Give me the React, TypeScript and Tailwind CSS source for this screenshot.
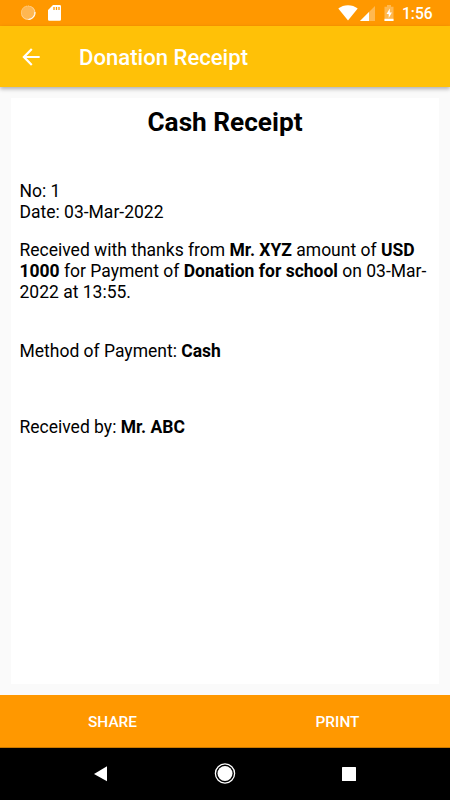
import React from "react";

export default function App() {
  return (
    <div className="flex h-[800px] w-[450px] flex-col overflow-hidden bg-[#fafafa] font-['Roboto',sans-serif]">
      <div className="flex h-[26px] shrink-0 items-center bg-[#ff9800] text-white">
        <svg width="80" height="26" viewBox="0 0 80 26">
          <circle cx="28.300" cy="12.900" r="7.200" fill="#ffd59b" />
          <circle cx="27.900" cy="12.500" r="6.500" fill="#ffb752" stroke="#ffcb80" strokeWidth="0.900" strokeDasharray="1 1" />
          <path d="M35 12a7 7 0 0 1-6.500 7.500" fill="none" stroke="#fff" strokeWidth="1" />
          <path d="M53 5H59.700a1.300 1.300 0 0 1 1.300 1.300v13.200a1.300 1.300 0 0 1-1.300 1.300H49.300a1.300 1.300 0 0 1-1.300-1.300V10z" fill="#fff" />
          <path d="M54 7v3M56.500 7v3M59 7v3" stroke="#ff9800" strokeWidth="1.300" />
        </svg>
        <svg className="ml-auto" width="64" height="26" viewBox="336 0 64 26">
          <path d="M338.300 8.500C343.500 4 352.500 4 357.700 8.500L348 20.500z" fill="#fff" />
          <path d="M375 6V21H360z" fill="#ffb850" />
          <path d="M369 12V21H360z" fill="#fff" />
          <path d="M387 5h4v1.800h2.500V21h-9V6.800h2.500z" fill="#ffb850" />
          <path d="M384.500 18.800h9V21h-9z" fill="#fff" />
          <path d="M389.800 8.500l-3.300 5.500h2.200v4l3.200-5.500h-2.100z" fill="#fff" />
        </svg>
        <span className="w-[50px] pt-[2px] pl-[2px] text-[15.600px] leading-[26px] font-medium">1:56</span>
      </div>
      <header className="relative flex h-[61px] shrink-0 items-center bg-[#ffc107] text-white shadow-[0_2px_4px_rgba(0,0,0,0.3)]">
        <svg className="ml-[18px]" width="26" height="26" viewBox="0 0 24 24" fill="#fff"><path d="M20 11H7.830l5.590-5.590L12 4l-8 8 8 8 1.410-1.410L7.830 13H20z" /></svg>
        <h1 className="ml-[35px] pt-[3px] text-[22.100px] font-medium">Donation Receipt</h1>
      </header>
      <main className="mx-[11px] mt-[11px] mb-[11px] flex-1 bg-white pr-[9px] pl-[8.500px] text-[17.500px] leading-[21px] text-black">
        <h2 className="pt-[9px] pl-[0.500px] text-center text-[26.200px] leading-[31px] font-bold">Cash Receipt</h2>
        <p className="mt-[43px]">No: 1<br />Date: 03-Mar-2022</p>
        <p className="mt-[17px] whitespace-nowrap">Received with thanks from <b className="font-bold">Mr. XYZ</b> amount of <b className="font-bold">USD<br />1000</b> for Payment of <b className="font-bold">Donation for school</b> on 03-Mar-<br />2022 at 13:55.</p>
        <p className="mt-[38px]">Method of Payment: <b className="font-bold">Cash</b></p>
        <p className="mt-[55px]">Received by: <b className="font-bold">Mr. ABC</b></p>
      </main>
      <div className="grid h-[53px] shrink-0 grid-cols-2 border-b border-[#c87800] bg-[#ff9800] pt-px text-center text-[15.400px] leading-[53px] font-medium text-white">
        <button>SHARE</button><button>PRINT</button>
      </div>
      <nav className="h-[52px] shrink-0 bg-black">
        <svg width="450" height="52" viewBox="0 748 450 52" fill="#fff">
          <path d="M107 766.300v15L94 774z" />
          <circle cx="225" cy="773.500" r="7.500" />
          <circle cx="225" cy="773.500" r="9.600" fill="none" stroke="#fff" strokeWidth="1.300" />
          <rect x="342" y="767" width="14" height="14" rx="0.500" />
        </svg>
      </nav>
    </div>
  );
}
